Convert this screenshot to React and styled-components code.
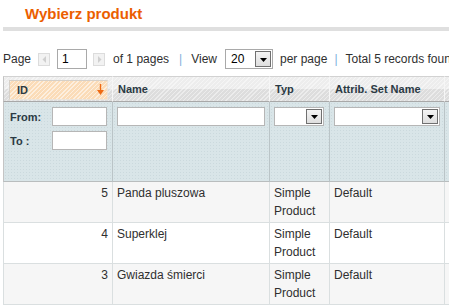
import React from 'react';
import styled, { createGlobalStyle } from 'styled-components';

const Global = createGlobalStyle`
  html, body { margin: 0; padding: 0; background: #fff; }
  body {
    font-family: Arial, "Liberation Sans", sans-serif;
    font-size: 12px;
    color: #2f2f2f;
    overflow: hidden;
  }
  * { box-sizing: border-box; }
`;

const Page = styled.div`
  width: 449px;
  height: 305px;
  overflow: hidden;
  padding-left: 3px;
`;

const ContentHeader = styled.div`
  padding: 5px 0 4px 22px;
  border-bottom: 4px solid #dfdfdf;
`;

const Title = styled.h3`
  margin: 0;
  font-size: 15px;
  line-height: 18px;
  font-weight: bold;
  color: #eb5e00;
`;

const Pager = styled.div`
  display: flex;
  align-items: center;
  height: 20px;
  margin-top: 18px;
  white-space: nowrap;
  color: #2f2f2f;
  & > * { flex-shrink: 0; }
`;

const PagerText = styled.span`
  margin-left: ${p => p.$ml || 0}px;
  line-height: 20px;
`;

const Sep = styled.span`
  color: #7fb0dd;
  margin: 0 ${p => p.$mr}px 0 ${p => p.$ml}px;
`;

const ArrowBtn = styled.span`
  display: inline-flex;
  align-items: center;
  justify-content: center;
  width: 12px;
  height: 13px;
  margin-left: ${p => p.$ml}px;
  background: #f2f2f2;
  border: 1px solid #dcdcdc;
`;

const TextInput = styled.input`
  width: ${p => p.$w}px;
  height: ${p => p.$h || 19}px;
  margin-left: ${p => p.$ml || 0}px;
  border: 1px solid ${p => p.$bc || '#b6b6b6'};
  background: #fff;
  padding: 0 4px;
  font: 12px Arial, "Liberation Sans", sans-serif;
  color: #000;
  outline: none;
`;

const SelectBox = styled.div`
  display: flex;
  align-items: stretch;
  width: ${p => p.$w}px;
  height: ${p => p.$h}px;
  margin-left: ${p => p.$ml || 0}px;
  border: 1px solid ${p => p.$bc || '#a9a9a9'};
  background: #fff;
  padding: 1px;
`;

const SelectValue = styled.span`
  flex: 1;
  padding-left: 4px;
  font-size: 12px;
  line-height: ${p => p.$lh}px;
  color: #000;
`;

const SelectButton = styled.span`
  display: flex;
  align-items: center;
  justify-content: center;
  width: 16px;
  background: linear-gradient(#f4f4f4, #dedede);
  border: 1px solid #707070;
  padding-top: 1px;
`;

const Grid = styled.table`
  margin-top: 7px;
  border-collapse: separate;
  border-spacing: 0;
  table-layout: fixed;
  width: 640px;
`;

const HeadCell = styled.th`
  width: ${p => p.$w}px;
  padding: ${p => (p.$sorted ? '2px 4px 1px 5px' : '0 4px')};
  height: 25px;
  border-top: 1px solid #d2d2d2;
  border-bottom: 1px solid #a8a8a8;
  border-right: 1px solid #f6f6f6;
  border-left: ${p => (p.$first ? '1px solid #c4c4c4' : '0')};
  background:
    repeating-linear-gradient(135deg, rgba(255,255,255,0.45) 0 1px, transparent 1px 3px),
    linear-gradient(#ededed 0, #ededed 48%, #dddddd 52%, #dddddd 100%);
  text-align: left;
  vertical-align: middle;
  font-size: 11px;
  font-weight: bold;
  color: #2b3a44;
  white-space: nowrap;
  overflow: hidden;
`;

const HeadLabel = styled.span`
  display: block;
  line-height: 23px;
  padding-left: 1px;
  padding-top: 1px;
`;

const SortBox = styled.div`
  display: flex;
  align-items: center;
  justify-content: space-between;
  height: 20px;
  padding: 0 3px 0 7px;
  border: 1px solid #d6d0c8;
  border-right-color: #ece4da;
  border-bottom-color: #ece4da;
  background:
    repeating-linear-gradient(135deg, rgba(255,255,255,0.55) 0 1px, transparent 1px 3px),
    #fbdcb8;
  line-height: 18px;
`;

const FilterCell = styled.td`
  padding: 5px 4px 0;
  vertical-align: top;
  border-bottom: 1px solid #b9bdbe;
  border-right: 1px solid #bac4c7;
  border-left: ${p => (p.$first ? '1px solid #c4c4c4' : '0')};
  background-color: #d9e5e8;
  background-image: radial-gradient(circle, #cbd9dd 0.6px, transparent 0.9px);
  background-size: 3px 3px;
`;

const FilterBody = styled.div`
  height: 74px;
`;

const Range = styled.div`
  display: grid;
  grid-template-columns: 44px 55px;
  row-gap: 5px;
  align-items: center;
`;

const RangeLabel = styled.span`
  font-size: 11px;
  font-weight: bold;
  color: #2b3a44;
  padding-left: 2px;
`;

const Row = styled.tr`
  background: ${p => (p.$odd ? '#f6f6f6' : '#ffffff')};
`;

const Cell = styled.td`
  padding: 2px 4px 2px;
  line-height: 18px;
  vertical-align: top;
  text-align: ${p => (p.$right ? 'right' : 'left')};
  border-bottom: 1px solid #dadfe0;
  border-right: 1px solid #dadfe0;
  border-left: ${p => (p.$first ? '1px solid #dadfe0' : '0')};
  color: #2f2f2f;
  overflow: hidden;
`;

const Tri = ({ dir, color }) => (
  <svg width="5" height="7" viewBox="0 0 5 7">
    {dir === 'left' ? (
      <path d="M4 0V7L0.5 3.5Z" fill={color} />
    ) : (
      <path d="M1 0V7L4.5 3.5Z" fill={color} />
    )}
  </svg>
);

const DownTri = () => (
  <svg width="7" height="4" viewBox="0 0 7 4">
    <path d="M0 0H7L3.5 4Z" fill="#000" />
  </svg>
);

const SortArrow = () => (
  <svg width="7" height="11" viewBox="0 0 7 11">
    <path d="M3.5 0V8" stroke="#ee6a14" strokeWidth="1.4" />
    <path d="M0 6H7L3.5 11Z" fill="#ee6a14" />
  </svg>
);

const Select = ({ value, w, h, ml, lh, bc }) => (
  <SelectBox $w={w} $h={h} $ml={ml} $bc={bc}>
    <SelectValue $lh={lh}>{value}</SelectValue>
    <SelectButton>
      <DownTri />
    </SelectButton>
  </SelectBox>
);

const rows = [
  { id: 5, name: 'Panda pluszowa', type: 'Simple Product', set: 'Default' },
  { id: 4, name: 'Superklej', type: 'Simple Product', set: 'Default' },
  { id: 3, name: 'Gwiazda śmierci', type: 'Simple Product', set: 'Default' },
];

export default function App() {
  return (
    <>
      <Global />
      <Page>
        <ContentHeader>
          <Title>Wybierz produkt</Title>
        </ContentHeader>

        <Pager>
          <PagerText>Page</PagerText>
          <ArrowBtn $ml={7}>
            <Tri dir="left" color="#cfcfcf" />
          </ArrowBtn>
          <TextInput $w={30} $h={20} $ml={7} $bc="#a9a9a9" defaultValue="1" />
          <ArrowBtn $ml={6}>
            <Tri dir="right" color="#cfcfcf" />
          </ArrowBtn>
          <PagerText $ml={8}>of 1 pages</PagerText>
          <Sep $ml={10} $mr={9}>|</Sep>
          <PagerText>View</PagerText>
          <Select value="20" w={48} h={20} ml={8} lh={16} bc="#a9a9a9" />
          <PagerText $ml={7}>per page</PagerText>
          <Sep $ml={7} $mr={8}>|</Sep>
          <PagerText>Total 5 records found</PagerText>
        </Pager>

        <Grid>
          <thead>
            <tr>
              <HeadCell $w={110} $first $sorted>
                <SortBox>
                  <span>ID</span>
                  <SortArrow />
                </SortBox>
              </HeadCell>
              <HeadCell $w={157}><HeadLabel>Name</HeadLabel></HeadCell>
              <HeadCell $w={60}><HeadLabel>Typ</HeadLabel></HeadCell>
              <HeadCell $w={115}><HeadLabel>Attrib. Set Name</HeadLabel></HeadCell>
              <HeadCell $w={198}><HeadLabel /></HeadCell>
            </tr>
            <tr>
              <FilterCell $first>
                <FilterBody>
                  <Range>
                    <RangeLabel>From:</RangeLabel>
                    <TextInput $w={55} />
                    <RangeLabel>To :</RangeLabel>
                    <TextInput $w={55} />
                  </Range>
                </FilterBody>
              </FilterCell>
              <FilterCell>
                <TextInput $w={148} />
              </FilterCell>
              <FilterCell>
                <Select value="" w={50} h={19} lh={15} bc="#b6b6b6" />
              </FilterCell>
              <FilterCell>
                <Select value="" w={106} h={19} lh={15} bc="#b6b6b6" />
              </FilterCell>
              <FilterCell />
            </tr>
          </thead>
          <tbody>
            {rows.map((r, i) => (
              <Row key={r.id} $odd={i % 2 === 0}>
                <Cell $first $right>{r.id}</Cell>
                <Cell>{r.name}</Cell>
                <Cell>{r.type}</Cell>
                <Cell>{r.set}</Cell>
                <Cell />
              </Row>
            ))}
          </tbody>
        </Grid>
      </Page>
    </>
  );
}
